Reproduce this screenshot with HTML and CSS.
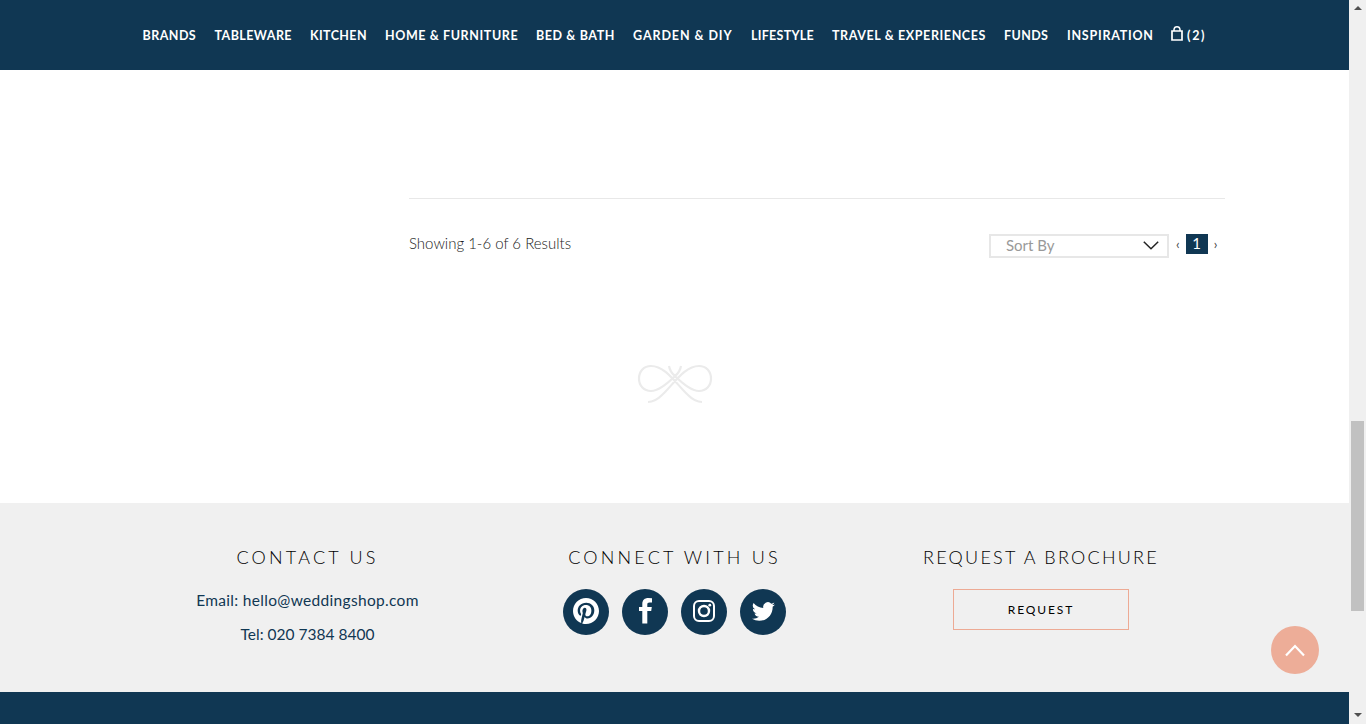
FILE: index.html
```html
<!DOCTYPE html>
<html lang="en">
<head>
<meta charset="utf-8">
<title>The Wedding Shop</title>
<link rel="stylesheet" href="styles.css">
</head>
<body>
<div class="page">
  <header class="nav">
    <a class="n1">BRANDS</a><a class="n2">TABLEWARE</a><a class="n3">KITCHEN</a><a class="n4">HOME &amp; FURNITURE</a><a class="n5">BED &amp; BATH</a><a class="n6">GARDEN &amp; DIY</a><a class="n7">LIFESTYLE</a><a class="n8">TRAVEL &amp; EXPERIENCES</a><a class="n9">FUNDS</a><a class="n10">INSPIRATION</a><a class="bag"><svg width="12" height="15" viewBox="0 0 12 15" fill="none" stroke="#fff"><path d="M1 5h10v9H1z" stroke-width="1.7"/><path d="M3 5V3.500Q3.300 .8 6 .8T9 3.500V5" stroke-width="1.5"/></svg><span>(2)</span></a>
  </header>
  <main class="main">
    <section class="results">
      <p class="showing">Showing 1-6 of 6 Results</p>
      <div class="select"><span>Sort By</span><svg width="16" height="9" viewBox="0 0 16 9" fill="none" stroke="#222" stroke-width="1.5"><path d="M.8 .8 8 7.800 15.200 .8"/></svg></div>
      <nav class="pager"><a>‹</a><b>1</b><a>›</a></nav>
    </section>
    <svg class="bow" width="76" height="40" viewBox="0 0 76 40" fill="none" stroke="#ebebeb" stroke-width="2.200"><path d="M11 38Q18 38 25 31C37 20 47 2 62 2C69 2 74 7 74 14.500C74 22 69 27 62 27C54 27 46 20 38 12Q33 8 32 2M65 38Q58 38 51 31C39 20 29 2 14 2C7 2 2 7 2 14.500C2 22 7 27 14 27C22 27 30 20 38 12Q43 8 44 2"/></svg>
  </main>
  <footer class="footer">
    <section class="col contact">
      <h2>CONTACT US</h2>
      <p class="email">Email: hello@weddingshop.com</p>
      <p class="tel">Tel: 020 7384 8400</p>
    </section>
    <section class="col connect">
      <h2>CONNECT WITH US</h2>
      <div class="social">
        <a><svg width="26" height="26" viewBox="0 0 24 24" fill="#fff"><path d="M12 0C5.373 0 0 5.373 0 12c0 5.084 3.163 9.426 7.627 11.174-.105-.949-.2-2.405.042-3.441.218-.937 1.407-5.965 1.407-5.965s-.359-.719-.359-1.782c0-1.668.967-2.914 2.171-2.914 1.023 0 1.518.769 1.518 1.690 0 1.029-.655 2.568-.994 3.995-.283 1.194.599 2.169 1.777 2.169 2.133 0 3.772-2.249 3.772-5.495 0-2.873-2.064-4.882-5.012-4.882-3.414 0-5.418 2.561-5.418 5.207 0 1.031.397 2.138.893 2.738a.36.36 0 0 1 .083.345l-.333 1.360c-.053.220-.174.267-.402.161-1.499-.698-2.436-2.889-2.436-4.649 0-3.785 2.750-7.262 7.929-7.262 4.163 0 7.398 2.967 7.398 6.931 0 4.136-2.607 7.464-6.227 7.464-1.216 0-2.359-.631-2.750-1.378l-.748 2.853c-.271 1.043-1.002 2.350-1.492 3.146C9.570 23.812 10.763 24 12 24c6.627 0 12-5.373 12-12S18.627 0 12 0z"/></svg></a>
        <a><svg width="13" height="26" viewBox="0 0 13 26" fill="#fff"><path d="M13 .2V4.500H10.500C8.800 4.500 8.300 5.200 8.300 6.600V9H12.800L12.200 13H8.300V25.500H3.300V13H0V9H3.300V6C3.300 2 5.700 0 9.300 0Q11.500 0 13 .2z"/></svg></a>
        <a><svg width="22" height="22" viewBox="0 0 22 22" fill="none" stroke="#fff" stroke-width="2"><rect x="1" y="1" width="20" height="20" rx="5"/><circle cx="11" cy="11" r="5" stroke-width="2.400"/><circle cx="16.800" cy="5.200" r="1.400" fill="#fff" stroke="none"/></svg></a>
        <a><svg width="23" height="23" viewBox="0 0 24 24" fill="#fff"><path d="M23.950 4.570a10 10 0 0 1-2.820.770 4.960 4.960 0 0 0 2.160-2.720c-.950.550-2 .950-3.130 1.180a4.920 4.920 0 0 0-8.380 4.480C7.690 8.090 4.070 6.130 1.640 3.160a4.930 4.930 0 0 0 1.520 6.570 4.900 4.900 0 0 1-2.230-.610v.060a4.920 4.920 0 0 0 3.950 4.830 5 5 0 0 1-2.210.080 4.940 4.940 0 0 0 4.600 3.420A9.870 9.870 0 0 1 0 19.540a13.990 13.990 0 0 0 7.550 2.210c9.050 0 14-7.500 14-13.980 0-.210 0-.420-.020-.630a9.900 9.900 0 0 0 2.420-2.570z"/></svg></a>
      </div>
    </section>
    <section class="col brochure">
      <h2>REQUEST A BROCHURE</h2>
      <a class="request">REQUEST</a>
    </section>
  </footer>
  <div class="base"></div>
</div>
<aside class="scrollbar"><i class="up"></i><i class="thumb"></i><i class="down"></i></aside>
<a class="top"><svg width="20" height="13" viewBox="0 0 20 13" fill="none" stroke="#fff" stroke-width="2.200"><path d="M1 11.500 10 2l9 9.500"/></svg></a>
</body>
</html>
```
FILE: styles.css
```css
* { box-sizing: border-box; }
body { margin: 0; height: 724px; overflow: hidden; display: flex; background: #fff; font-family: Lato, "Liberation Sans", sans-serif; }
h2, p { margin: 0; font-weight: 400; }
svg { display: block; }
.page { width: 1349px; height: 724px; display: flex; flex-direction: column; }
.nav { height: 70px; flex: none; padding-left: 142.500px; display: flex; align-items: center; background: #103753; color: #fff; font-size: 12.500px; font-weight: 700; white-space: nowrap; }
.nav a { flex: none; }
.n1 { width: 72px; letter-spacing: .45px; }
.n2 { width: 95.500px; letter-spacing: .42px; }
.n3 { width: 75px; letter-spacing: .4px; }
.n4 { width: 151px; letter-spacing: .6px; }
.n5 { width: 97px; letter-spacing: .6px; }
.n6 { width: 118px; letter-spacing: .92px; }
.n7 { width: 81px; letter-spacing: .27px; }
.n8 { width: 172px; letter-spacing: .6px; }
.n9 { width: 63px; letter-spacing: .4px; }
.n10 { width: 104px; letter-spacing: .75px; }
.bag { display: flex; align-items: center; gap: 4px; letter-spacing: 1.700px; }
.bag svg { margin-top: -3px; }
.main { height: 433px; flex: none; padding-top: 128px; }
.results { width: 816px; margin-left: 409px; border-top: 1px solid #e8e8e8; height: 166px; padding-top: 35px; display: flex; align-items: flex-start; }
.showing { width: 580px; margin-top: -1px; font-size: 15px; line-height: 20px; font-weight: 300; color: #222; }
.select { width: 180px; height: 24px; border: 2px solid #e7e7e7; padding: 0 8px 0 15px; display: flex; align-items: center; justify-content: space-between; font-size: 15px; color: #999; }
.select span { margin-top: -2px; }
.select svg { margin-top: -1px; }
.pager { display: flex; align-items: center; height: 20px; padding-left: 7px; gap: 6px; font-size: 13px; color: #444; }
.pager b { width: 22px; height: 20px; background: #103753; color: #fff; font-size: 15px; font-weight: 400; line-height: 19px; text-align: center; }
.bow { margin-left: 637px; }
.footer { height: 189px; flex: none; background: #f0f0f0; display: flex; padding-left: 124px; }
.col { width: 367px; padding-top: 41px; text-align: center; display: flex; flex-direction: column; align-items: center; }
.brochure { width: 366px; }
h2 { font-size: 18px; line-height: 26px; font-weight: 300; letter-spacing: 3.200px; color: #000; white-space: nowrap; }
.brochure h2 { letter-spacing: 2.250px; }
.contact p { font-size: 15.500px; line-height: 20px; color: #103753; }
.contact .email { margin-top: 20px; letter-spacing: .32px; }
.contact .tel { margin-top: 14px; }
.social { display: flex; gap: 13px; margin-top: 19px; }
.social a { width: 46px; height: 46px; border-radius: 50%; background: #103753; display: flex; align-items: center; justify-content: center; padding-bottom: 2px; }
.request { width: 176px; height: 41px; margin-top: 19px; border: 1px solid #edaa94; font-size: 12px; line-height: 39px; letter-spacing: 1.900px; color: #000; }
.base { height: 32px; flex: none; background: #103753; }
.scrollbar { width: 17px; height: 724px; background: #f0f0f0; display: flex; flex-direction: column; align-items: center; }
.up, .down { border: 4px solid transparent; width: 0; }
.up { border-top: 0; border-bottom-color: #505050; margin-top: 6px; }
.down { border-bottom: 0; border-top-color: #505050; margin-top: 102px; }
.thumb { width: 13px; height: 190px; margin-top: 411px; background: #c1c1c1; }
.top { position: absolute; left: 1271px; top: 626px; width: 48px; height: 48px; border-radius: 50%; background: #edad98; display: flex; align-items: center; justify-content: center; }
```
